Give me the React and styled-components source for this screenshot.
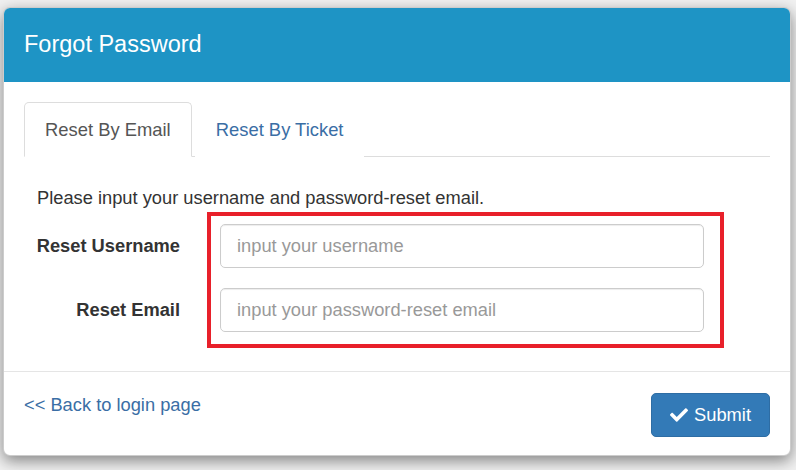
import { useState } from "react";
import styled, { createGlobalStyle } from "styled-components";
import { FaCheck } from "react-icons/fa";

const GlobalStyle = createGlobalStyle`
  html, body {
    margin: 0;
    padding: 0;
    background: #f1f1f1;
    font-family: "Liberation Sans", Arial, sans-serif;
    color: #333;
  }
  * {
    box-sizing: border-box;
  }
`;

const Page = styled.div`
  padding: 7px 5px 14px 3px;
  width: 796px;
  height: 470px;
`;

const Modal = styled.div`
  width: 788px;
  background: #fff;
  border: 1px solid rgba(0, 0, 0, 0.2);
  border-radius: 7px;
  box-shadow: 0 5px 15px rgba(0, 0, 0, 0.45);
  overflow: hidden;
`;

const Header = styled.div`
  background: #1e94c5;
  padding: 19px 20px;
  height: 74px;
`;

const Title = styled.h4`
  margin: 0;
  color: #fff;
  font-size: 23.5px;
  font-weight: normal;
  line-height: 34px;
`;

const Body = styled.div`
  padding: 20px 20px 19px;
`;

const Tabs = styled.ul`
  display: flex;
  list-style: none;
  margin: 0;
  padding: 0;
  border-bottom: 1px solid #ddd;
`;

const Tab = styled.li`
  margin-right: 3px;
  margin-bottom: -1px;
  padding: 14px 20px 13px;
  font-size: 18.4px;
  line-height: 26px;
  border: 1px solid ${(p) => (p.active ? "#ddd" : "transparent")};
  border-bottom-color: ${(p) => (p.active ? "#fff" : "transparent")};
  border-radius: 5px 5px 0 0;
  background: #fff;
  color: ${(p) => (p.active ? "#555" : "#3a6ea5")};
  cursor: pointer;
`;

const Intro = styled.p`
  margin: 28px 0 13px 13px;
  font-size: 18.3px;
  line-height: 26px;
  color: #333;
`;

const Form = styled.form`
  position: relative;
`;

const Row = styled.div`
  display: grid;
  grid-template-columns: 156px 484px;
  column-gap: 40px;
  align-items: center;
  margin-bottom: 20px;
`;

const Label = styled.label`
  text-align: right;
  font-weight: bold;
  font-size: 18.3px;
  line-height: 26px;
  color: #333;
`;

const Input = styled.input`
  height: 44px;
  width: 100%;
  padding: 0 16px;
  font-family: "Liberation Sans", Arial, sans-serif;
  font-size: 18.3px;
  color: #555;
  border: 1px solid #ccc;
  border-radius: 5px;
  box-shadow: inset 0 1px 1px rgba(0, 0, 0, 0.075);
  outline: none;
  &::placeholder {
    color: #999;
  }
`;

const Highlight = styled.div`
  position: absolute;
  left: 183px;
  top: -12px;
  width: 517px;
  height: 136px;
  border: 4px solid #e8202a;
  pointer-events: none;
`;

const Footer = styled.div`
  display: flex;
  justify-content: space-between;
  align-items: flex-start;
  padding: 21px 20px 18px 20px;
  border-top: 1px solid #e5e5e5;
`;

const BackLink = styled.a`
  margin-top: -1px;
  font-size: 18.3px;
  line-height: 26px;
  color: #3a6ea5;
  text-decoration: none;
  cursor: pointer;
`;

const SubmitButton = styled.button`
  display: flex;
  align-items: center;
  gap: 6px;
  height: 44px;
  padding: 0 18px;
  font-family: "Liberation Sans", Arial, sans-serif;
  font-size: 18.3px;
  color: #fff;
  background: #337ab7;
  border: 1px solid #2e6da4;
  border-radius: 5px;
  cursor: pointer;
`;

function App() {
  const [tab, setTab] = useState("email");

  return (
    <>
      <GlobalStyle />
      <Page>
        <Modal>
          <Header>
            <Title>Forgot Password</Title>
          </Header>
          <Body>
            <Tabs>
              <Tab active={tab === "email"} onClick={() => setTab("email")}>
                Reset By Email
              </Tab>
              <Tab active={tab === "ticket"} onClick={() => setTab("ticket")}>
                Reset By Ticket
              </Tab>
            </Tabs>
            <Intro>Please input your username and password-reset email.</Intro>
            <Form onSubmit={(e) => e.preventDefault()}>
              <Row>
                <Label htmlFor="username">Reset Username</Label>
                <Input id="username" placeholder="input your username" />
              </Row>
              <Row>
                <Label htmlFor="email">Reset Email</Label>
                <Input id="email" placeholder="input your password-reset email" />
              </Row>
              <Highlight />
            </Form>
          </Body>
          <Footer>
            <BackLink>&lt;&lt; Back to login page</BackLink>
            <SubmitButton type="button">
              <FaCheck size={18} />
              Submit
            </SubmitButton>
          </Footer>
        </Modal>
      </Page>
    </>
  );
}

export default App;
